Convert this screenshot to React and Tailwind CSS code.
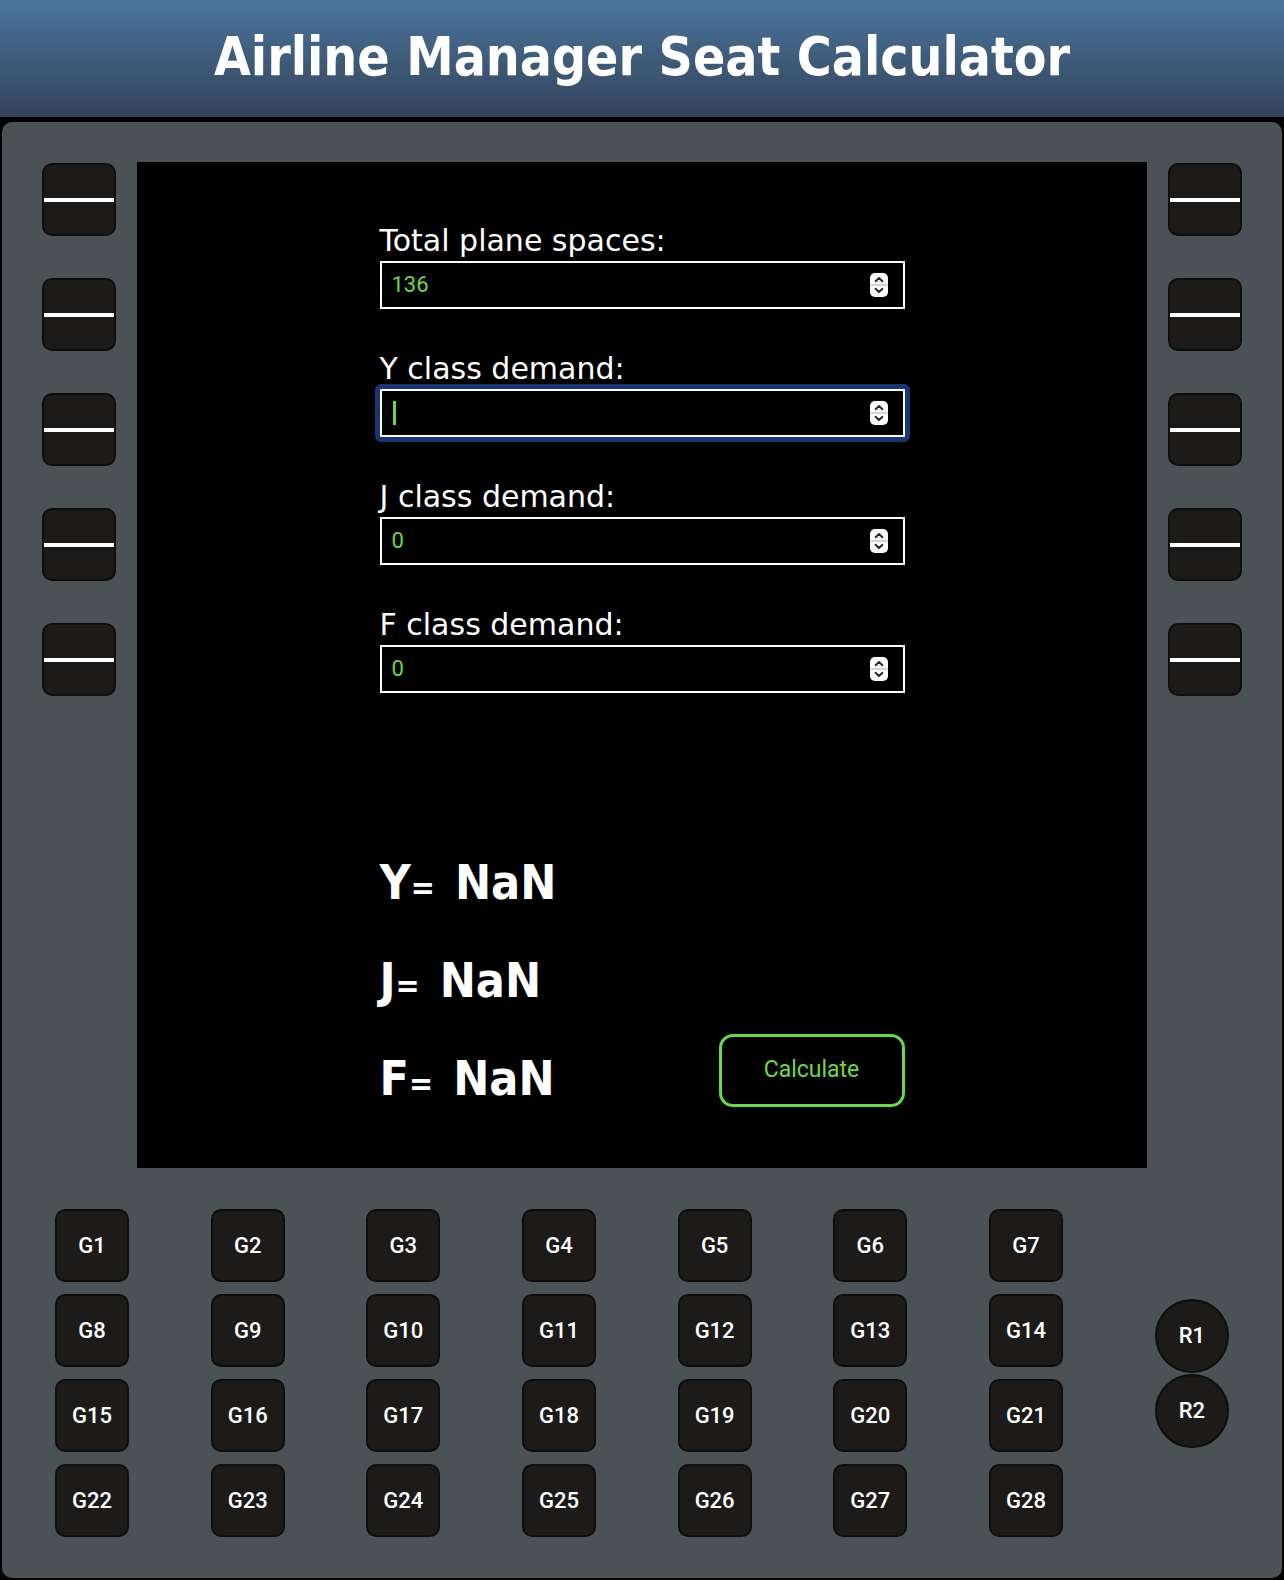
import React from "react";

const DJ = { fontFamily: '"DejaVu Sans", "Liberation Sans", sans-serif' };
const DJC = { fontFamily: '"DejaVu Sans Condensed", "DejaVu Sans", sans-serif' };
const RB = { fontFamily: 'Roboto, "Liberation Sans", Arial, sans-serif' };

function Spinner() {
  return (
    <svg width="18" height="24" viewBox="0 0 18 24" className="shrink-0">
      <rect x="0" y="0" width="18" height="24" rx="5" fill="#ffffff" />
      <rect x="0" y="10.8" width="18" height="2.4" fill="#d6d6d6" />
      <path d="M5.6 8.2 L9 5 L12.4 8.2" stroke="#262626" strokeWidth="1.9" fill="none" strokeLinecap="round" strokeLinejoin="round" />
      <path d="M5.6 15.8 L9 19 L12.4 15.8" stroke="#262626" strokeWidth="1.9" fill="none" strokeLinecap="round" strokeLinejoin="round" />
    </svg>
  );
}

function Field({ label, value, focused }) {
  return (
    <div>
      <div className="text-[30px] leading-[36px] text-white mb-[2px] whitespace-nowrap" style={DJ}>
        {label}
      </div>
      <div className="relative h-[48px] border-2 border-white flex items-center pl-[10px] pr-[15px]">
        {focused && (
          <span className="pointer-events-none absolute -inset-[7px] rounded-[6px] border-[5px] border-[#1b3472]" />
        )}
        <div className="flex-1 flex items-center">
          {focused ? (
            <span className="block w-[3px] h-[24px] bg-[#6bd84b] ml-[1px]" />
          ) : (
            <span className="text-[22px] leading-none text-[#6bd84b]" style={RB}>
              {value}
            </span>
          )}
        </div>
        <Spinner />
      </div>
    </div>
  );
}

function SideButton() {
  return (
    <div className="w-[74px] h-[73px] rounded-[10px] border-2 border-[#0e0e0d] bg-[#1c1b19] flex items-center">
      <div className="w-full h-[4px] bg-white" />
    </div>
  );
}

function Result({ letter }) {
  return (
    <div className="h-[98px] text-[48px] leading-[98px] font-bold text-white whitespace-nowrap" style={DJC}>
      <span>{letter}</span>
      <span className="text-[32px] leading-none">=</span>
      <span className="ml-[20px]">NaN</span>
    </div>
  );
}

export default function App() {
  const gButtons = Array.from({ length: 28 }, (_, i) => `G${i + 1}`);
  return (
    <div className="min-h-[1580px] bg-black">
      <header className="h-[117px] bg-gradient-to-b from-[#4b769d] to-[#33435a] flex items-center justify-center pb-[4px]">
        <h1 className="text-white text-[53px] font-bold leading-none" style={DJC}>
          Airline Manager Seat Calculator
        </h1>
      </header>

      <div className="mt-[5px] ml-[2px] w-[1280px] h-[1456px] bg-[#4b5256] rounded-[10px] pt-[40px] px-[40px]">
        <div className="flex">
          <div className="flex flex-col gap-[42px] mt-[1px]">
            {[0, 1, 2, 3, 4].map((i) => (
              <SideButton key={i} />
            ))}
          </div>

          <div className="ml-[21px] w-[1010px] h-[1006px] bg-black flex flex-col items-center pt-[61px]">
            <div className="w-[525px] flex flex-col">
              <div className="flex flex-col gap-[42px]">
                <Field label="Total plane spaces:" value="136" />
                <Field label="Y class demand:" value="" focused />
                <Field label="J class demand:" value="0" />
                <Field label="F class demand:" value="0" />
              </div>

              <div className="mt-[140px] flex items-end justify-between">
                <div className="flex flex-col">
                  <Result letter="Y" />
                  <Result letter="J" />
                  <Result letter="F" />
                </div>
                <button
                  className="mb-[20px] w-[186px] h-[73px] rounded-[14px] border-[3px] border-[#6bd84b] bg-black text-[#6bd84b] text-[23px]"
                  style={RB}
                >
                  Calculate
                </button>
              </div>
            </div>
          </div>

          <div className="ml-[21px] flex flex-col gap-[42px] mt-[1px]">
            {[0, 1, 2, 3, 4].map((i) => (
              <SideButton key={i} />
            ))}
          </div>
        </div>

        <div className="mt-[41px] flex items-center pl-[13px]">
          <div className="grid grid-cols-[repeat(7,74px)] gap-x-[81.67px] gap-y-[12px]">
            {gButtons.map((g) => (
              <div
                key={g}
                className="w-[74px] h-[73px] rounded-[10px] border-2 border-[#0e0e0d] bg-[#1c1b19] flex items-center justify-center text-white text-[22px] font-medium"
                style={RB}
              >
                {g}
              </div>
            ))}
          </div>
          <div className="ml-[92px] flex flex-col gap-[1px]">
            {["R1", "R2"].map((r) => (
              <div
                key={r}
                className="w-[74px] h-[74px] rounded-full border-2 border-[#0e0e0d] bg-[#1c1b19] flex items-center justify-center text-white text-[22px] font-medium"
                style={RB}
              >
                {r}
              </div>
            ))}
          </div>
        </div>
      </div>
    </div>
  );
}
